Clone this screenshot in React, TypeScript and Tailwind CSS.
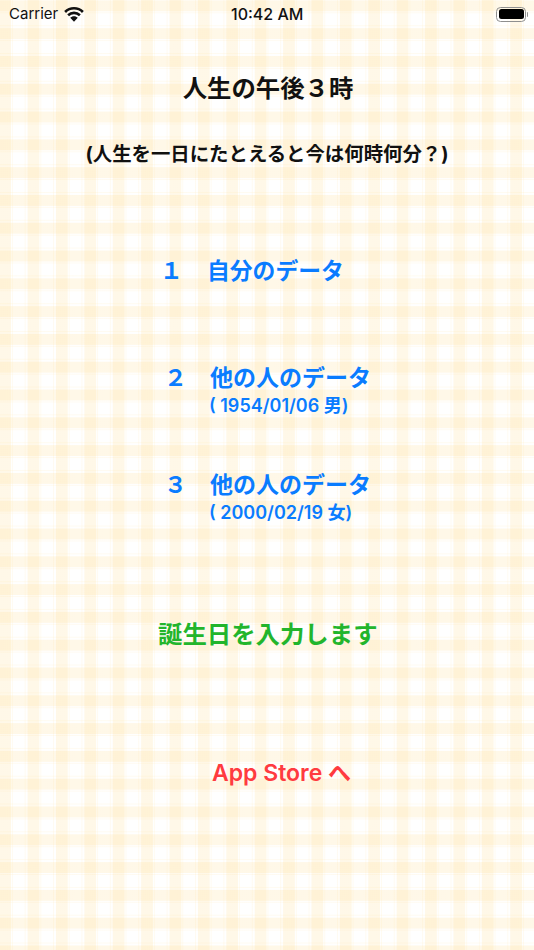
import React from 'react'

const WifiIcon = () => (
  <svg width="20" height="15" viewBox="0 0 20 15" fill="none" className="ml-[6px]">
    <path d="M1.100 5C3.400 2.700 6.500 1.300 10 1.300s6.600 1.400 8.900 3.700" stroke="#111" strokeWidth="2.600" />
    <path d="M4.100 8.300C5.700 6.800 7.700 5.900 10 5.900s4.300.9 5.900 2.400" stroke="#111" strokeWidth="2.600" />
    <path d="M10 9.200c-1.500 0-2.800.6-3.800 1.500L10 14.800l3.800-4.100c-1-.9-2.300-1.500-3.800-1.500z" fill="#111" />
  </svg>
)

const Battery = () => (
  <div className="flex items-center">
    <div className="w-[30px] h-[15px] rounded-[4.5px] border border-[#8f8f8f] p-[1.5px]">
      <div className="w-full h-full rounded-[2.5px] bg-black" />
    </div>
    <div className="w-[1.500px] h-[5px] rounded-r-sm bg-[#8f8f8f] ml-[0.5px]" />
  </div>
)

export default function App() {
  return (
    <div className="w-[534px] h-[950px] overflow-hidden bg-white bg-[linear-gradient(90deg,rgba(255,222,150,0.22)_0,rgba(255,222,150,0.22)_11.5px,transparent_11.5px,transparent_12.5px,rgba(255,222,150,0.13)_12.5px,rgba(255,222,150,0.13)_13.6px,transparent_13.6px,transparent_25.6px,rgba(255,222,150,0.13)_25.6px,rgba(255,222,150,0.13)_26.7px,transparent_26.7px),linear-gradient(180deg,rgba(255,222,150,0.22)_0,rgba(255,222,150,0.22)_11px,transparent_11px,transparent_12px,rgba(255,222,150,0.13)_12px,rgba(255,222,150,0.13)_13px,transparent_13px,transparent_24.7px,rgba(255,222,150,0.13)_24.7px,rgba(255,222,150,0.13)_25.7px,transparent_25.7px)] bg-[size:28.4px_27.8px] bg-[position:-0.8px_0.4px] font-['Inter','Noto_Sans_CJK_JP',sans-serif]">
      <div className="relative flex items-center justify-between h-[28px] pl-[9px] pr-[6px] text-[#111]">
        <div className="flex items-center">
          <span className="text-[15px] leading-[28px]">Carrier</span>
          <WifiIcon />
        </div>
        <span className="absolute left-[231px] top-0 text-[16px] leading-[28px] font-medium">10:42 AM</span>
        <Battery />
      </div>

      <h1 className="mt-[45px] pl-[2px] h-[30px] text-center text-[24.400px] leading-[30px] font-bold text-[#111]">人生の午後３時</h1>
      <p className="mt-[37px] h-[28px] text-center text-[19.400px] leading-[28px] font-bold text-[#111]">(人生を一日にたとえると今は何時何分？)</p>

      <div className="mt-[88px] h-[30px] pl-[160px] flex text-[22.800px] leading-[30px] font-semibold text-[#0a7cff]">
        <span className="w-[47px]">１</span>
        <span>自分のデータ</span>
      </div>

      <div className="mt-[77px] h-[30px] pl-[164px] flex text-[23px] leading-[30px] font-semibold text-[#0a7cff]">
        <span className="w-[46px]">２</span>
        <span>他の人のデータ</span>
      </div>
      <div className="mt-[2px] h-[22px] pl-[209px] text-[18px] leading-[22px] font-semibold text-[#0a7cff] whitespace-pre">( 1954/01/06 男)</div>

      <div className="mt-[53px] h-[30px] pl-[164px] flex text-[23px] leading-[30px] font-semibold text-[#0a7cff]">
        <span className="w-[46px]">３</span>
        <span>他の人のデータ</span>
      </div>
      <div className="mt-[2px] h-[22px] pl-[209px] text-[18px] leading-[22px] font-semibold text-[#0a7cff] whitespace-pre">( 2000/02/19 女)</div>

      <div className="mt-[95px] h-[30px] pl-[158px] text-[24.400px] leading-[30px] font-semibold text-[#22b52c]">誕生日を入力します</div>

      <div className="mt-[109px] h-[30px] pl-[212px] text-[23px] leading-[30px] font-semibold text-[#ff3b40]">App Store へ</div>
    </div>
  )
}
